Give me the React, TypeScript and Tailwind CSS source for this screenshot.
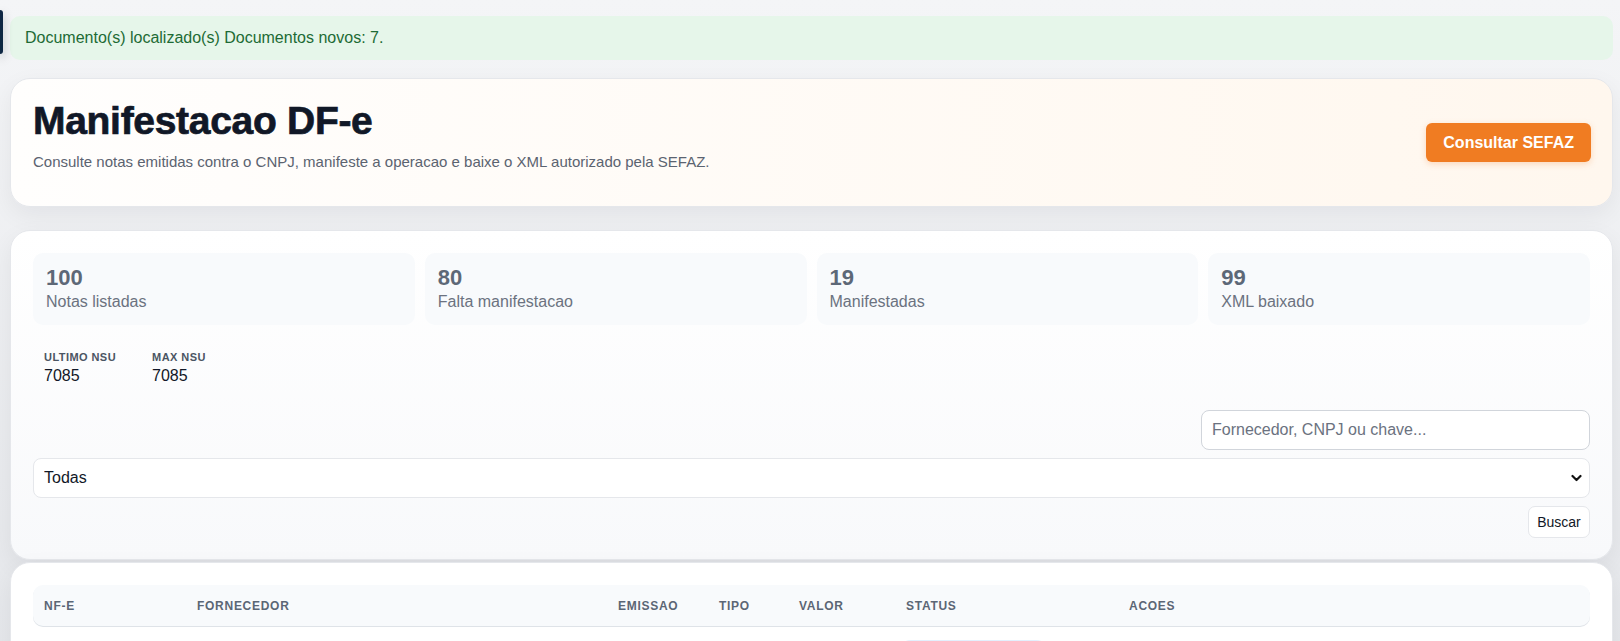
import React from "react";

const cols = "grid grid-cols-[153px_421px_101px_80px_107px_223px_1fr]";

export default function App() {
  const headers = ["NF-E", "FORNECEDOR", "EMISSAO", "TIPO", "VALOR", "STATUS", "ACOES"];
  return (
    <div className="relative min-h-[641px] bg-linear-to-b from-[#f4f5f7] to-[#e3e5e9] pl-[10px] pr-[7px] pt-4 pb-10 font-['Liberation_Sans',Arial,sans-serif]">
      <div className="absolute left-0 top-[10px] h-[44px] w-[3px] rounded-r-[4px] bg-[#0f2744] shadow-[0_4px_10px_rgba(15,23,42,0.35)]" />

      <div className="rounded-[10px] bg-[#e6f6ea] px-[15px] py-[10px] text-[16px] leading-6 text-[#1d6b35]">
        Documento(s) localizado(s) Documentos novos: 7.
      </div>

      <header className="mt-[18px] flex items-center justify-between rounded-[20px] border border-[#e5e7eb] bg-linear-to-r from-[#fffefd] to-[#fff7ee] pl-[22px] pr-[21px] shadow-[0_8px_24px_rgba(15,23,42,0.06)]">
        <div className="pt-[19px] pb-[34px]">
          <h1 className="text-[39px] font-bold leading-[46px] tracking-[-0.3px] text-[#111827] [-webkit-text-stroke:0.7px_#111827]">
            Manifestacao DF-e
          </h1>
          <p className="mt-[8px] text-[15px] leading-5 text-[#5b6370]">
            Consulte notas emitidas contra o CNPJ, manifeste a operacao e baixe o XML autorizado pela SEFAZ.
          </p>
        </div>
        <button className="h-[39px] rounded-[6px] bg-[#f07c22] px-[17px] text-[16px] font-bold text-white shadow-[0_2px_6px_rgba(240,124,34,0.25)]">
          Consultar SEFAZ
        </button>
      </header>

      <section className="mt-[23px] rounded-[20px] border border-[#e5e7eb] bg-linear-to-b from-white to-[#f8f9fb] px-[22px] pt-[22px] pb-[21px] shadow-[0_8px_24px_rgba(15,23,42,0.06)]">
        <div className="grid grid-cols-4 gap-[10px]">
          {[
            ["100", "Notas listadas"],
            ["80", "Falta manifestacao"],
            ["19", "Manifestadas"],
            ["99", "XML baixado"],
          ].map(([n, l]) => (
            <div key={l} className="rounded-[10px] bg-[#f8fafc] px-[13px] pt-[13px] pb-[11px]">
              <div className="text-[22px] font-bold leading-6 text-[#5d6877]">{n}</div>
              <div className="text-[16px] leading-6 text-[#6b7280]">{l}</div>
            </div>
          ))}
        </div>

        <div className="mt-[25px] flex gap-[36px] pl-[11px]">
          {[
            ["ULTIMO NSU", "7085"],
            ["MAX NSU", "7085"],
          ].map(([l, v]) => (
            <div key={l}>
              <div className="text-[11px] font-bold uppercase leading-[14px] tracking-[0.04em] text-[#4b5563]">{l}</div>
              <div className="mt-[2px] text-[16px] leading-5 text-[#111827]">{v}</div>
            </div>
          ))}
        </div>

        <div className="mt-[24px] flex justify-end">
          <input
            className="h-[40px] w-[389px] rounded-[8px] border border-[#d1d5db] bg-white px-[10px] text-[16px] text-[#111827] outline-none placeholder:text-[#6b7280]"
            placeholder="Fornecedor, CNPJ ou chave..."
          />
        </div>

        <div className="relative mt-2">
          <select className="h-[40px] w-full appearance-none rounded-[8px] border border-[#e5e7eb] bg-white px-[10px] text-[16px] text-[#111827] outline-none">
            <option>Todas</option>
            <option>Falta manifestacao</option>
            <option>Manifestadas</option>
          </select>
          <svg
            className="pointer-events-none absolute right-[8px] top-1/2 -translate-y-1/2"
            width="11"
            height="8"
            viewBox="0 0 11 8"
            fill="none"
          >
            <path d="M1.5 2L5.5 6L9.5 2" stroke="#111" strokeWidth="2.2" strokeLinecap="round" strokeLinejoin="round" />
          </svg>
        </div>

        <div className="mt-2 flex justify-end">
          <button className="h-[32px] w-[62px] rounded-[7px] border border-[#e5e7eb] bg-white text-[14px] text-[#111827]">
            Buscar
          </button>
        </div>
      </section>

      <section className="mt-[2px] rounded-[20px] border border-[#e5e7eb] bg-white px-[22px] pt-[22px] pb-[22px] shadow-[0_8px_24px_rgba(15,23,42,0.06)]">
        <div className={`${cols} h-[41px] items-center rounded-[10px] bg-[#f8fafc] shadow-[0_1px_0_#dfe3e8]`}>
          {headers.map((h) => (
            <div key={h} className="px-[11px] text-[12px] font-bold uppercase tracking-[0.06em] text-[#5b6675]">
              {h}
            </div>
          ))}
        </div>
        <div className={`${cols} items-start py-[14px]`}>
          <div />
          <div />
          <div />
          <div />
          <div />
          <div className="px-[2px]">
            <span className="block h-[28px] w-[153px] rounded-full bg-[#e3f0fd]" />
          </div>
          <div />
        </div>
      </section>
    </div>
  );
}
